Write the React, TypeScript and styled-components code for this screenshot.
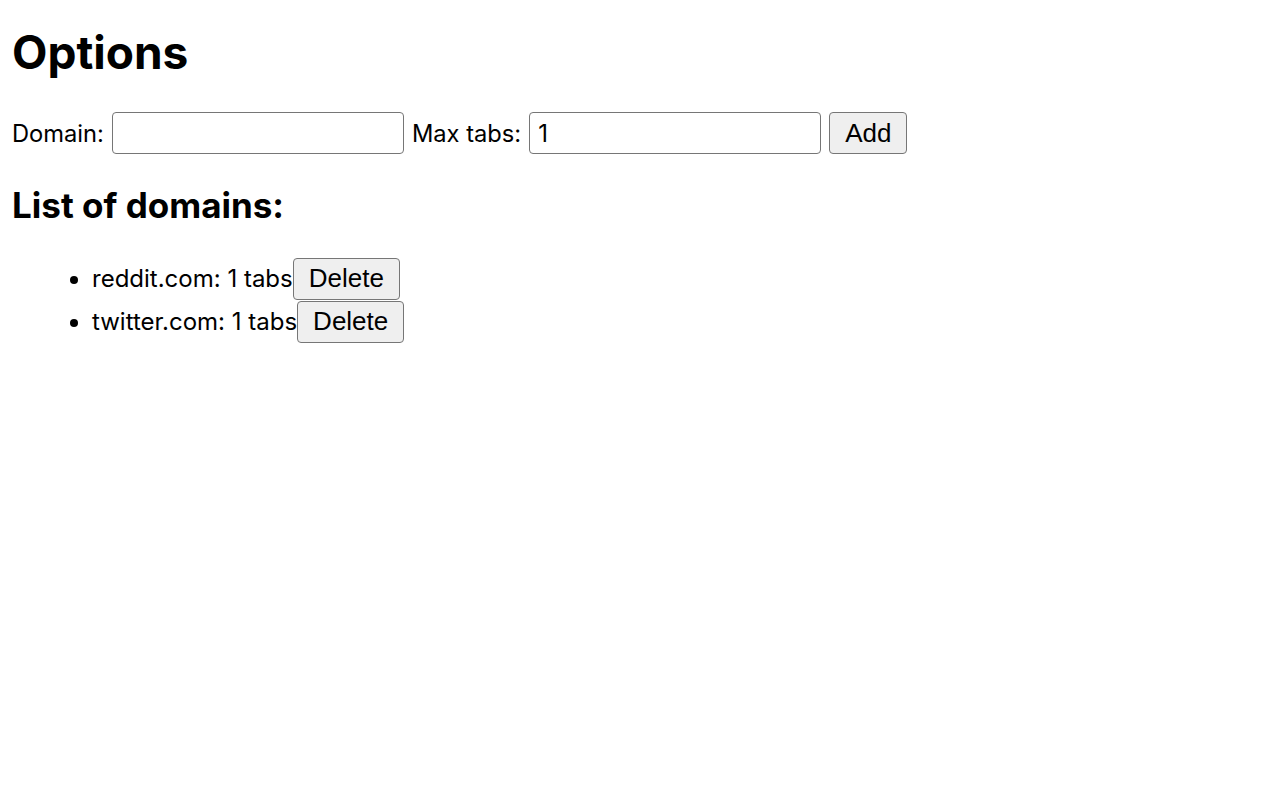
import React, { useState } from "react";
import styled, { createGlobalStyle } from "styled-components";

const GlobalStyle = createGlobalStyle`
  html, body {
    margin: 0;
    padding: 0;
    background: #ffffff;
  }
  body {
    font-family: Inter, "Liberation Sans", sans-serif;
    color: #000000;
  }
`;

const Page = styled.div`
  padding: 0 12px;
`;

const Title = styled.h1`
  margin: 0;
  padding-top: 24px;
  font-size: 46px;
  font-weight: 700;
  line-height: 56px;
`;

const Form = styled.form`
  display: flex;
  align-items: center;
  margin-top: 32px;
  height: 42px;
  font-size: 23.7px;
`;

const Label = styled.label`
  margin-right: 8px;
`;

const TextInput = styled.input`
  box-sizing: border-box;
  width: 292px;
  height: 42px;
  margin-right: 8px;
  padding: 0 8px;
  border: 1.5px solid #767676;
  border-radius: 4px;
  font-family: inherit;
  font-size: 24px;
  color: #000000;
  outline: none;
`;

const Button = styled.button`
  box-sizing: border-box;
  height: 42px;
  padding: 0 15px;
  background: #efefef;
  border: 1.5px solid #767676;
  border-radius: 4px;
  font-family: "Liberation Sans", Arial, sans-serif;
  font-size: 26px;
  color: #000000;
  vertical-align: baseline;
`;

const SubTitle = styled.h2`
  margin: 0;
  margin-top: 29px;
  font-size: 35px;
  font-weight: 700;
  line-height: 44px;
`;

const DomainList = styled.ul`
  margin: 30px 0 0;
  padding-left: 80px;
  font-size: 24px;
`;

const DomainItem = styled.li`
  height: 43px;
  line-height: 43px;
`;

export default function App() {
  const [domain, setDomain] = useState("");
  const [maxTabs, setMaxTabs] = useState("1");
  const [list, setList] = useState([
    { name: "reddit.com", tabs: 1 },
    { name: "twitter.com", tabs: 1 },
  ]);

  const addDomain = (e: React.FormEvent) => {
    e.preventDefault();
    if (!domain) return;
    setList([...list, { name: domain, tabs: Number(maxTabs) || 1 }]);
    setDomain("");
  };

  return (
    <>
      <GlobalStyle />
      <Page>
        <Title>Options</Title>
        <Form onSubmit={addDomain}>
          <Label htmlFor="domain">Domain:</Label>
          <TextInput
            id="domain"
            value={domain}
            onChange={(e) => setDomain(e.target.value)}
          />
          <Label htmlFor="maxTabs">Max tabs:</Label>
          <TextInput
            id="maxTabs"
            value={maxTabs}
            onChange={(e) => setMaxTabs(e.target.value)}
          />
          <Button type="submit">Add</Button>
        </Form>
        <SubTitle>List of domains:</SubTitle>
        <DomainList>
          {list.map((item) => (
            <DomainItem key={item.name}>
              {item.name}: {item.tabs} tabs
              <Button
                onClick={() => setList(list.filter((d) => d.name !== item.name))}
              >
                Delete
              </Button>
            </DomainItem>
          ))}
        </DomainList>
      </Page>
    </>
  );
}
